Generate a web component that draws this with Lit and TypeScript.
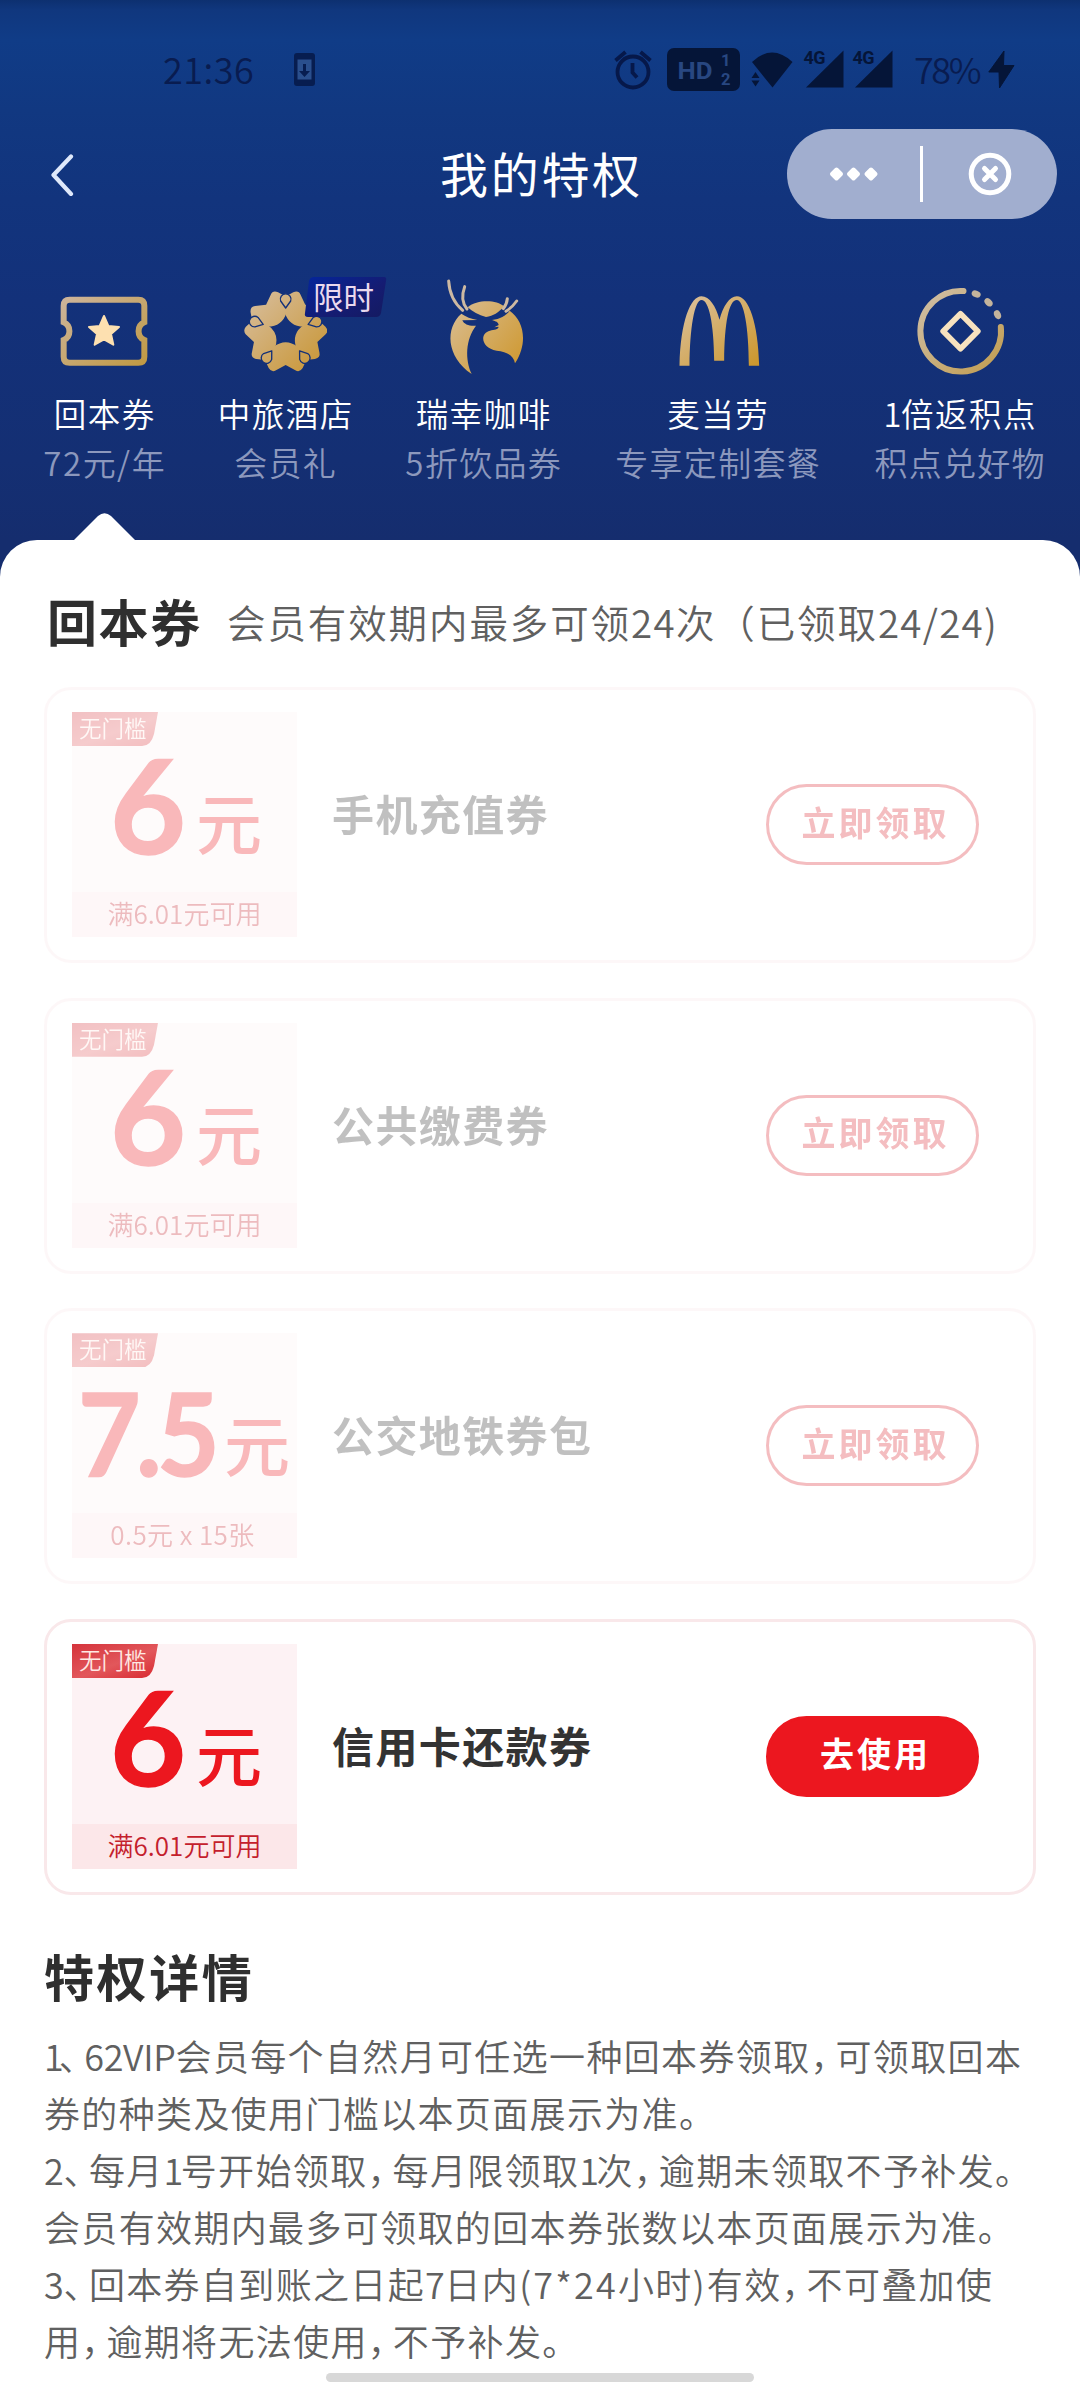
import { LitElement, html, css, svg, nothing } from "lit";
import type { TemplateResult } from "lit";
import { customElement, property } from "lit/decorators.js";
import { classMap } from "lit/directives/class-map.js";

/** Splits a string so that Latin runs and pause marks get their own spacing. */
const mixed = (text: string) =>
  text
    .split(/([，、]|[\x21-\x7e]+)/)
    .filter((part) => part)
    .map((part) => {
      if (/^[，、]$/.test(part)) {
        return html`<span class=${classMap({ pause: true, list: part === "、" })}>${part}</span>`;
      }
      if (/^[\x21-\x7e]/.test(part)) {
        return html`<span class=${classMap({ latin: true, one: part === "1", paren: /[()]/.test(part) })}>${part}</span>`;
      }
      return part;
    });

interface Coupon {
  amount: string;
  note: string;
  name: string;
  active?: boolean;
  small?: boolean;
}

const COUPONS: Coupon[] = [
  { amount: "6", note: "满6.01元可用", name: "手机充值券" },
  { amount: "6", note: "满6.01元可用", name: "公共缴费券" },
  { amount: "7.5", note: "0.5元 x 15张", name: "公交地铁券包", small: true },
  { amount: "6", note: "满6.01元可用", name: "信用卡还款券", active: true },
];

const RULES = [
  "1、62VIP会员每个自然月可任选一种回本券领取，可领取回本",
  "券的种类及使用门槛以本页面展示为准。",
  "2、每月1号开始领取，每月限领取1次，逾期未领取不予补发。",
  "会员有效期内最多可领取的回本券张数以本页面展示为准。",
  "3、回本券自到账之日起7日内(7*24小时)有效，不可叠加使",
  "用，逾期将无法使用，不予补发。",
];

const gold = (id: string, from = "#d3b795", to = "#cb9c3c") => svg`
  <linearGradient id=${id} x1="0" y1="0" x2="1" y2="1">
    <stop offset="0" stop-color=${from}></stop>
    <stop offset="1" stop-color=${to}></stop>
  </linearGradient>`;

const ticketIcon = html`<svg class="icon" viewBox="168 55 288 294">
  <defs>${gold("g-ticket", "#cdb49a", "#c09a45")}</defs>
  <path fill="none" stroke="url(#g-ticket)" stroke-width="18" d="M209 120H415Q433 120 433 138V188C410 198 410 231 433 241V291Q433 309 415 309H209Q191 309 191 291V241C214 231 214 198 191 188V138Q191 120 209 120Z"></path>
  <path fill="#fde0b0" stroke="#fde0b0" stroke-width="6" stroke-linejoin="round" d="M312 169L325 199L357 202L333 223L340 255L312 239L284 255L291 223L267 202L299 199Z"></path>
</svg>`;

const TURNS = [0, 72, 144, 216, 288];
const flowerIcon = html`<svg class="icon" viewBox="711 55 288 294">
  <defs>
    ${gold("g-flower", "#d8c0a4", "#c8942f")}
    <mask id="m-flower" maskUnits="userSpaceOnUse" x="711" y="55" width="288" height="294">
      ${TURNS.map(
        (a) => svg`<path transform="rotate(${a} 857 216)" fill="#fff"
          d="M814 276L821 261Q857 234 893 261L900 276L919 301L908 325Q899 340 886 332L857 316L828 332Q815 340 806 325L795 301Z"></path>`
      )}
      ${TURNS.map(
        (a) => svg`<path transform="rotate(${a} 857 216)" fill="#fff" stroke="#000" stroke-width="4" stroke-linejoin="round"
          d="M857 145L842 124A16 16 0 1 1 872 124Z"></path>`
      )}
    </mask>
  </defs>
  <rect x="733" y="85" width="248" height="254" fill="url(#g-flower)" mask="url(#m-flower)"></rect>
</svg>`;

const deerIcon = html`<svg class="icon" viewBox="165 55 288 294">
  <defs>
    <linearGradient id="g-deer" gradientUnits="userSpaceOnUse" x1="215" y1="130" x2="425" y2="300">
      <stop offset="0" stop-color="#d9bd93"></stop>
      <stop offset="1" stop-color="#cf9a34"></stop>
    </linearGradient>
  </defs>
  <g fill="url(#g-deer)">
    <path d="M244 162C195 205 198 290 275 343C255 300 256 240 288 198C270 200 252 195 247 182L292 181C275 178 256 171 244 162Z"></path>
    <path d="M263 143C292 119 350 120 372 141C355 158 340 169 318 172C296 167 277 156 263 143Z"></path>
    <path d="M389 153C432 183 445 250 405 311C401 287 380 276 350 273C303 266 298 220 330 213C344 211 358 209 355 201L343 203L356 196C355 187 348 185 336 181C360 178 377 169 389 153Z"></path>
  </g>
  <g fill="none" stroke="#cdb9a2" stroke-width="9" stroke-linecap="round">
    <path d="M206 64C208 100 222 130 248 152"></path>
    <path d="M254 81C244 108 248 132 261 148"></path>
    <path d="M382 117C381 130 377 138 370 147"></path>
    <path d="M410 124C400 138 391 147 378 155"></path>
  </g>
</svg>`;

const archesIcon = html`<svg class="icon" viewBox="868.5 55 288 294">
  <defs>${gold("g-arches", "#dcc2a0", "#cb962a")}</defs>
  <path fill="url(#g-arches)" d="M897 318C900 185 930 110 963 110C987 110 1006 140 1017 180C1028 140 1047 110 1069 110C1105 110 1133 190 1136 318H1105C1105 205 1090 121 1069 121C1045 121 1032 190 1031 303H1001C1000 190 985 121 963 121C942 121 928 205 927 318Z"></path>
</svg>`;

const pointsIcon = html`<svg class="icon" viewBox="394.5 55 288 294">
  <defs>${gold("g-points", "#cfbfa8", "#c29d50")}</defs>
  <path fill="none" stroke="url(#g-points)" stroke-width="18" stroke-linecap="round" d="M549 94A121 121 0 1 0 661 202"></path>
  <g fill="#c4b49c">
    <ellipse cx="587" cy="103" rx="14" ry="10" transform="rotate(22 587 103)"></ellipse>
    <ellipse cx="624" cy="128" rx="14" ry="10" transform="rotate(45 624 128)"></ellipse>
    <ellipse cx="651" cy="165" rx="14" ry="10" transform="rotate(66 651 165)"></ellipse>
  </g>
  <path fill="none" stroke="#f7e2bf" stroke-width="17" stroke-linejoin="round" d="M540 162L592 215L540 267L488 215Z"></path>
</svg>`;

interface Tab {
  icon: TemplateResult;
  label: string;
  sub: string;
  badge?: string;
}

const TABS: Tab[] = [
  { icon: ticketIcon, label: "回本券", sub: "72元/年" },
  { icon: flowerIcon, label: "中旅酒店", sub: "会员礼", badge: "限时" },
  { icon: deerIcon, label: "瑞幸咖啡", sub: "5折饮品券" },
  { icon: archesIcon, label: "麦当劳", sub: "专享定制套餐" },
  { icon: pointsIcon, label: "1倍返积点", sub: "积点兑好物" },
];

@customElement("coupon-card")
export class CouponCard extends LitElement {
  @property({ attribute: false }) coupon!: Coupon;

  static styles = css`
    :host {
      display: block;
    }
    .card {
      box-sizing: border-box;
      height: 276px;
      border: 3px solid #f9e8ea;
      border-radius: 27px;
      padding: 22px 54px 0 25px;
      display: flex;
      align-items: flex-start;
      background: #fff;
    }
    .card.off {
      opacity: 0.3;
    }
    .face {
      width: 225px;
      height: 225px;
      flex: none;
      display: flex;
      flex-direction: column;
      background: #fdf2f4;
      color: #ec171f;
    }
    .tag {
      width: 86px;
      height: 34px;
      line-height: 31px;
      padding-left: 7px;
      box-sizing: border-box;
      font-size: 22.5px;
      font-weight: 350;
      white-space: nowrap;
      color: #ffe9e4;
      background: linear-gradient(160deg, #d5343c, #e2575b 55%, #d9292f);
      clip-path: path("M0 0H86L82 22Q79 34 70 34H0Z");
    }
    .amount {
      box-sizing: border-box;
      height: 146px;
      display: flex;
      align-items: baseline;
      padding: 2px 0 0 38px;
      line-height: 112px;
      white-space: nowrap;
    }
    .figure {
      width: 86px;
      flex: none;
      font-family: Lato, "Noto Sans CJK SC", sans-serif;
      font-weight: 700;
      font-size: 131px;
      -webkit-text-stroke: 1.5px currentColor;
    }
    .unit {
      font-size: 66px;
      font-weight: 500;
      transform: translateY(-5px);
    }
    .amount.small {
      padding: 8px 0 0 6px;
    }
    .small .figure {
      display: inline-block;
      width: 146px;
      font-size: 115px;
      letter-spacing: -5px;
      transform: scaleX(0.94);
      transform-origin: left;
    }
    .note {
      height: 45px;
      line-height: 41px;
      text-align: center;
      font-size: 26px;
      font-weight: 350;
      white-space: nowrap;
      color: #c4202c;
      background: #fce7e9;
    }
    .small + .note {
      letter-spacing: 0.4px;
      padding-right: 4px;
    }
    .name {
      flex: 1;
      margin: 71px 0 0 35px;
      line-height: 60px;
      font-size: 42px;
      font-weight: 700;
      letter-spacing: 1.4px;
      white-space: nowrap;
      color: #333;
    }
    .action {
      width: 213px;
      height: 81px;
      box-sizing: border-box;
      margin-top: 72px;
      padding: 0 0 7px 6px;
      display: flex;
      align-items: center;
      justify-content: center;
      border: 3px solid #dc2832;
      border-radius: 41px;
      background: none;
      font-family: inherit;
      font-size: 34px;
      font-weight: 700;
      letter-spacing: 3px;
      color: #dc2832;
    }
    .action.solid {
      border-color: #ec171f;
      background: #ec171f;
      color: #fff;
    }
  `;

  render() {
    const c = this.coupon;
    return html`<div class=${classMap({ card: true, off: !c.active })}>
      <div class="face">
        <div class="tag">无门槛</div>
        <div class=${classMap({ amount: true, small: !!c.small })}>
          <span class="figure">${c.amount}</span><span class="unit">元</span>
        </div>
        <div class="note">${c.note}</div>
      </div>
      <div class="name">${c.name}</div>
      <button class=${classMap({ action: true, solid: !!c.active })}>${c.active ? "去使用" : "立即领取"}</button>
    </div>`;
  }
}

@customElement("app-root")
export class AppRoot extends LitElement {
  static styles = css`
    :host {
      display: block;
      position: relative;
      width: 1080px;
      height: 2400px;
      overflow: hidden;
      background: #fff;
      color: #333;
      font-family: "Noto Sans CJK SC", sans-serif;
    }
    .top {
      box-sizing: border-box;
      height: 580px;
      background: linear-gradient(#0d3070 0, #10377e 10px, #103c87 40px, #113881 110px, #12347d 200px, #13317a 300px, #142f73 460px, #152d6e 540px);
    }
    .status {
      height: 129px;
      box-sizing: border-box;
      padding: 10px 65px 0 163px;
      display: flex;
      align-items: center;
      color: #091c50;
      font-size: 36px;
      font-weight: 350;
      line-height: 46px;
    }
    .clock {
      width: 131px;
      margin-top: -4px;
      letter-spacing: 0.5px;
    }
    .phone {
      width: 21px;
      height: 33px;
    }
    .tray {
      width: 280px;
      height: 44px;
      margin-left: auto;
    }
    .battery {
      width: 74px;
      margin: -4px 0 0 20px;
      letter-spacing: -2.4px;
    }
    .bolt {
      width: 27px;
      height: 39px;
    }
    .nav {
      height: 90px;
      padding: 0 23px 0 50px;
      display: grid;
      grid-template-columns: 391px 1fr 270px;
      align-items: center;
    }
    .back {
      width: 24px;
      height: 44px;
    }
    .title {
      font-size: 48px;
      line-height: 60px;
      letter-spacing: 2.7px;
      font-weight: 400;
      margin: -4px 0 0 -1px;
      color: #fff;
    }
    .capsule {
      width: 270px;
      height: 90px;
    }
    .tabs {
      margin-top: 59px;
      padding-left: 44px;
      display: grid;
      grid-template-columns: 120px 132px 154px 205px 169px;
      column-gap: 55px;
    }
    .tab {
      position: relative;
      display: flex;
      flex-direction: column;
      align-items: center;
      white-space: nowrap;
    }
    .icon {
      display: block;
      width: 96px;
      height: 98px;
    }
    .label {
      margin-top: 13px;
      line-height: 48px;
      font-size: 32.5px;
      letter-spacing: 1.5px;
      margin-right: -1.5px;
      font-weight: 350;
      color: #fff;
    }
    .sub {
      margin-top: 1px;
      line-height: 48px;
      font-size: 33px;
      letter-spacing: 1.3px;
      margin-right: -1.3px;
      font-weight: 350;
      color: #8c98bd;
    }
    .sub .latin {
      letter-spacing: 1.6px;
    }
    .badge {
      position: absolute;
      left: 85px;
      top: -1px;
      width: 83px;
      height: 40px;
      box-sizing: border-box;
      padding-left: 9px;
      line-height: 38px;
      font-size: 30.5px;
      color: #ead9ee;
      background: linear-gradient(150deg, #04269c, #151c72 60%, #141a60);
      clip-path: path("M8 0H80Q83 0 82 4L77 36Q76 40 72 40H4Q0 40 1 36L5 4Q6 0 10 0Z");
    }
    .sheet {
      position: relative;
      margin-top: -40px;
      height: 1860px;
      box-sizing: border-box;
      padding: 46px 44px 0;
      border-radius: 37px 37px 0 0;
      background: #fff;
    }
    .pointer {
      position: absolute;
      left: 73px;
      top: -27px;
      width: 63px;
      height: 28px;
    }
    .head {
      height: 101px;
      display: flex;
      align-items: flex-start;
      white-space: nowrap;
    }
    h2 {
      margin: 0;
      font-weight: 700;
      font-size: 50px;
      line-height: 68px;
      letter-spacing: 1.6px;
      color: #2f2f2f;
    }
    .head h2 {
      width: 183px;
      padding-left: 3px;
      box-sizing: border-box;
    }
    .limit {
      margin-top: 1px;
      font-size: 38.5px;
      line-height: 68px;
      letter-spacing: 1.9px;
      font-weight: 350;
      color: #606060;
    }
    .latin {
      letter-spacing: -0.3px;
    }
    .limit .latin {
      letter-spacing: 1.3px;
    }
    .list {
      display: flex;
      flex-direction: column;
      gap: 34.67px;
    }
    .details {
      padding-top: 46px;
    }
    .details h2 {
      letter-spacing: 2.6px;
    }
    .rules {
      margin-top: 18px;
      font-size: 36px;
      line-height: 57px;
      letter-spacing: 1.35px;
      font-weight: 350;
      color: #606060;
      white-space: nowrap;
    }
    .rules .one {
      letter-spacing: -2.6px;
    }
    .rules .one:first-child {
      letter-spacing: -5px;
    }
    .rules .paren {
      letter-spacing: 2.2px;
    }
    .pause {
      font-feature-settings: "halt";
      letter-spacing: 7px;
    }
    .pause.list {
      display: inline;
      letter-spacing: 7.4px;
    }
    .home {
      position: absolute;
      left: 326px;
      bottom: 18px;
      width: 428px;
      height: 9px;
      border-radius: 5px;
      background: #d8d8d8;
    }
  `;

  private statusBar() {
    return html`<div class="status">
      <span class="clock">21:36</span>
      <svg class="phone" viewBox="0 0 21 33">
        <rect width="21" height="33" rx="3" fill="#071d50"></rect>
        <rect x="3.5" y="6.5" width="14" height="20" fill="#2a4f8d"></rect>
        <path fill="#071d50" d="M9 11H12V18H16L10.500 24L5 18H9Z"></path>
      </svg>
      <svg class="tray" viewBox="614 48 280 44">
        <g fill="none" stroke="#06184a" stroke-width="3.8">
          <circle cx="633" cy="72" r="15.500"></circle>
          <path d="M632.500 63V72.500L637 77.500M615.500 60.500L625.500 52M650.500 60.500L640.500 52"></path>
        </g>
        <rect x="667" y="48" width="73" height="43" rx="7" fill="#051538"></rect>
        <g fill="#284781" font-family="Roboto, sans-serif" font-weight="700">
          <text x="677.500" y="78.500" font-size="24" textLength="35" lengthAdjust="spacingAndGlyphs">HD</text>
          <text x="721" y="66" font-size="16.500">1</text>
          <text x="721" y="85" font-size="16.500">2</text>
        </g>
        <g fill="#051538">
          <path d="M752 62Q772 43 792.500 62L772.500 87.500Z"></path>
          <path d="M751.500 78L755.500 72L759.500 78ZM751.500 80.500L755.500 86.500L759.500 80.500Z"></path>
          <path d="M843.500 50.500V87.500H806Z"></path>
          <path d="M892.500 50.500V87.500H855Z"></path>
          <g font-family="Roboto, sans-serif" font-weight="700" font-size="18">
            <text x="803.500" y="64" textLength="22">4G</text>
            <text x="852.500" y="64" textLength="22">4G</text>
          </g>
        </g>
      </svg>
      <span class="battery">78%</span>
      <svg class="bolt" viewBox="0 0 27 39">
        <path fill="#051538" stroke="#051538" stroke-linejoin="round" d="M16 1L.8 22H11L11.500 38L26 15.500H15.500Z"></path>
      </svg>
    </div>`;
  }

  private navBar() {
    return html`<div class="nav">
      <svg class="back" viewBox="50 152 24 44">
        <path fill="none" stroke="#dfe9fb" stroke-width="4.200" stroke-linecap="round" stroke-linejoin="round" d="M71 156.500L53.500 175L71 194"></path>
      </svg>
      <h1 class="title">我的特权</h1>
      <svg class="capsule" viewBox="0 0 270 90">
        <rect width="270" height="90" rx="45" fill="#a1aecf"></rect>
        <g fill="#fff" stroke="#fff" stroke-width="4" stroke-linejoin="round">
          <path d="M49.500 40.500L54 45L49.500 49.500L45 45Z"></path>
          <path d="M66.500 40.500L71 45L66.500 49.500L62 45Z"></path>
          <path d="M84 40.500L88.500 45L84 49.500L79.500 45Z"></path>
        </g>
        <rect x="133" y="17" width="3" height="56" fill="#fff"></rect>
        <g fill="none" stroke="#fff" stroke-width="5" stroke-linecap="round">
          <circle cx="203" cy="45" r="18.800"></circle>
          <path d="M197.500 39.500L208.500 50.500M208.500 39.500L197.500 50.500"></path>
        </g>
      </svg>
    </div>`;
  }

  render() {
    return html`
      <header class="top">
        ${this.statusBar()} ${this.navBar()}
        <nav class="tabs">
          ${TABS.map(
            (t) => html`<div class="tab">
              ${t.icon}
              ${t.badge ? html`<span class="badge">${t.badge}</span>` : nothing}
              <span class="label">${mixed(t.label)}</span>
              <span class="sub">${mixed(t.sub)}</span>
            </div>`
          )}
        </nav>
      </header>
      <main class="sheet">
        <svg class="pointer" viewBox="0 0 63 28">
          <path fill="#fff" d="M0 28L25 3Q31.500 -2.500 38 3L63 28Z"></path>
        </svg>
        <div class="head">
          <h2>回本券</h2>
          <div class="limit">${mixed("会员有效期内最多可领24次（已领取24/24)")}</div>
        </div>
        <div class="list">
          ${COUPONS.map((c) => html`<coupon-card .coupon=${c}></coupon-card>`)}
        </div>
        <section class="details">
          <h2>特权详情</h2>
          <div class="rules">${RULES.map((r) => html`<div>${mixed(r)}</div>`)}</div>
        </section>
      </main>
      <div class="home"></div>
    `;
  }
}
